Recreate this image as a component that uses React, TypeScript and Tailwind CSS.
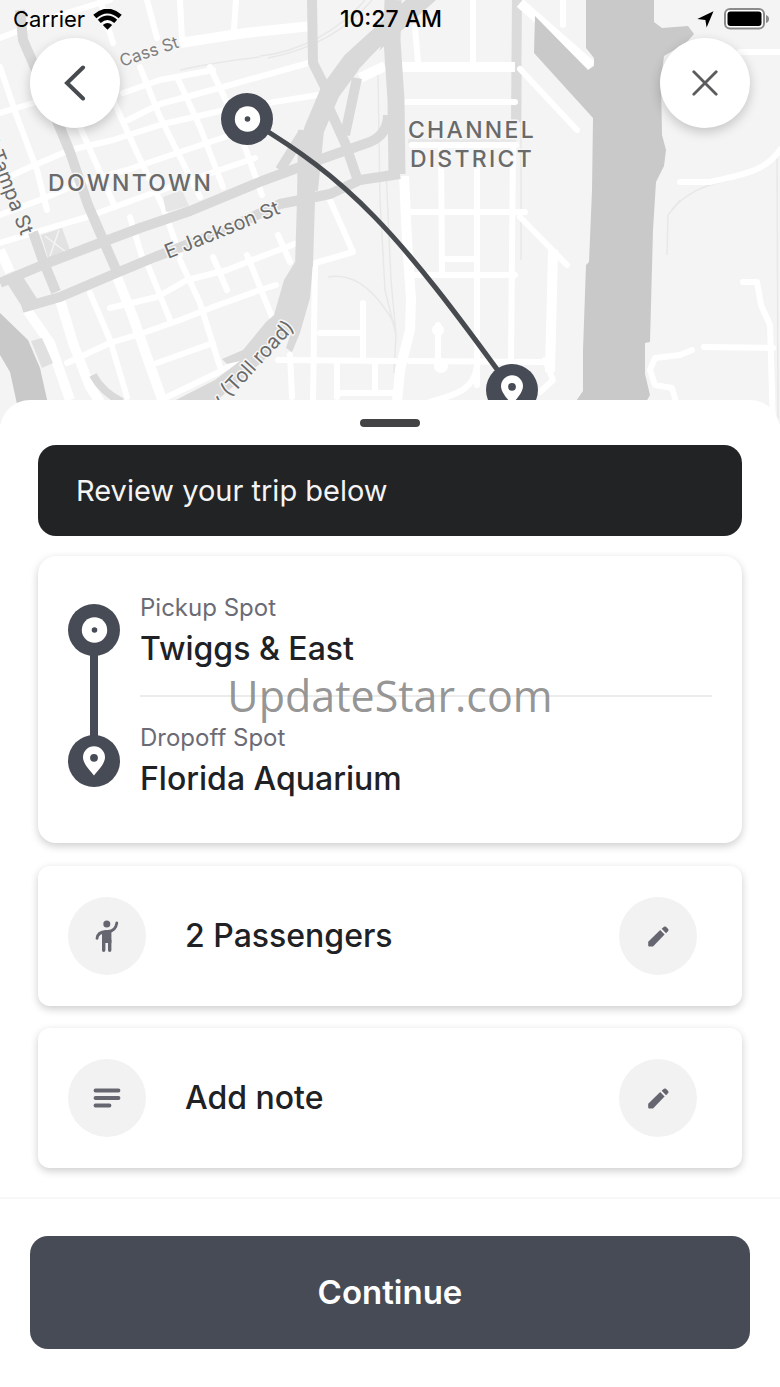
import React from "react";

interface CircleProps {
  children: React.ReactNode;
}

interface OptionRowProps {
  icon: React.ReactNode;
  label: string;
  editLabel: string;
}

interface Stop {
  type: string;
  name: string;
}

const stops: Stop[] = [
  { type: "Pickup Spot", name: "Twiggs & East" },
  { type: "Dropoff Spot", name: "Florida Aquarium" },
];

// White streets grouped by stroke width
const wideStreets = [
  "M117 277 L133 317 L147 357 L163 402",
  "M27 310 L50 343 L70 400",
  "M60 300 L73 343 L90 387 L100 402",
  "M404 176 L407 240 L411 300 L410 330 L400 370 L397 402",
  "M398 67 L515 67",
  "M553 250 L550 372",
  "M520 3 L592 66",
  "M0 250 L10 272",
  "M180 43 L245 33 L312 26",
  "M360 78 L385 66",
];

const mediumStreets = [
  "M0 38 L60 15 L110 0",
  "M0 113 L30 104 L62 92",
  "M123 93 L160 80 L213 70",
  "M128 120 L160 104 L223 87 L312 62",
  "M0 181 L30 167 L70 150 L113 140 L163 124 L225 110 L318 95",
  "M0 215 L40 200 L80 183 L127 170 L177 153 L240 132",
  "M0 243 L43 230 L87 217 L150 194 L255 158",
  "M110 308 L157 297 L187 280 L227 270 L260 257 L300 242",
  "M67 363 L110 343 L143 333 L180 320 L213 307 L260 290 L276 285",
  "M157 363 L213 343",
  "M167 397 L217 373 L240 360",
  "M0 67 L17 117 L37 170 L47 210",
  "M80 127 L99 170 L115 207",
  "M110 93 L137 153 L163 207 L180 255",
  "M140 67 L160 117 L200 197",
  "M177 77 L200 127 L223 187",
  "M210 67 L227 103 L246 150 L262 195",
  "M100 0 L113 43",
  "M147 0 L157 38",
  "M180 0 L182 40",
  "M236 0 L234 30",
  "M130 217 L143 260",
  "M147 263 L170 320",
  "M180 260 L200 303 L220 367",
  "M213 257 L227 290",
  "M247 255 L272 317",
  "M278 235 L290 262",
  "M90 293 L110 340 L127 397",
  "M401 102 L515 102",
  "M473 0 L473 65",
  "M415 27 L418 62",
  "M313 400 L315 263 L353 252 L330 200",
  "M278 360 L395 361",
  "M320 333 L363 333",
  "M363 303 L363 358",
  "M290 355 L292 397",
  "M337 362 L337 397",
  "M375 362 L375 393",
  "M340 393 L397 393",
  "M441 145 L442 275",
  "M477 145 L477 385",
  "M513 145 L511 365",
  "M412 145 L516 145",
  "M412 212 L525 212",
  "M415 275 L515 275",
  "M445 259 L477 259",
  "M438 325 L438 365",
  "M410 361 L550 362",
  "M477 365 C475 390 455 395 430 402",
  "M520 217 L567 265",
  "M520 69 L577 130",
  "M545 360 L553 380 L540 392",
  "M563 0 L563 25",
  "M740 52 L780 52",
  "M680 182 L710 182 C740 175 765 172 780 150",
  "M743 282 L757 282 L761 305 L770 325 L773 425",
  "M704 347 L773 348",
  "M692 350 L680 355 L655 358 L650 370 L655 385 L672 388 L676 402",
];

const arterials = [
  "M0 283 L45 264 L100 243 L140 228 L190 211 L262 181 L327 157 L370 142 Q388 134 388 115",
  "M22 308 L60 297 L114 274 L155 257 L220 232 L280 204 L330 194 L360 180 L400 174",
  "M20 10 L23 40 L33 63 L60 128 L70 152 L88 205 L98 228 L117 272",
  "M33 232 L42 258 L56 292",
  "M12 280 L30 304",
  "M312 0 L313 63 L330 97",
  "M357 78 L345 135",
  "M330 110 L345 143 L357 178",
  "M303 133 L280 170",
];

const railLines = [
  "M260 56 C300 52 340 30 365 0",
  "M268 58 C310 50 345 32 372 0",
  "M378 75 L380 200 L385 290 L396 335 L394 373",
  "M386 170 L391 280 L396 335",
  "M328 277 Q365 270 395 325",
  "M180 70 Q215 62 260 57",
  "M672 210 Q690 187 730 180",
  "M680 200 L668 215 L667 255",
  "M777 150 L778 420",
  "M521 70 L521 260",
];

const StartMark = () => (
  <>
    <circle cx="26" cy="26" r="26" fill="#474b55" />
    <circle cx="26.5" cy="26" r="12.7" fill="#fff" />
    <circle cx="26.5" cy="26" r="2.8" fill="#474b55" />
  </>
);

const EndMark = () => (
  <>
    <circle cx="26" cy="26" r="26" fill="#474b55" />
    <path
      d="M26 40.5 C23 36.5 15 29 15 22.3 A11 11 0 0 1 37 22.3 C37 29 29 36.5 26 40.5 Z"
      fill="#fff"
    />
    <circle cx="26" cy="22.8" r="3.9" fill="#474b55" />
  </>
);

const TripMap = () => (
  <svg
    viewBox="0 0 780 424"
    preserveAspectRatio="xMidYMin slice"
    className="absolute inset-0 h-full w-full font-['Inter',sans-serif]"
    role="img"
    aria-label="Trip map"
  >
    <rect width="780" height="424" fill="#f4f4f4" />

    {/* Rails and small streets */}
    <g fill="none" stroke="#e8e8e8" strokeWidth="1.5">
      {railLines.map((d) => (
        <path key={d} d={d} />
      ))}
    </g>
    <path d="M517 0 L516 122" stroke="#dbdbdb" strokeWidth="10" />
    <path d="M408 141 L516 141" stroke="#e8e8e8" strokeWidth="4" />
    <g fill="none" stroke="#fff" strokeLinejoin="round">
      <g strokeWidth="6" strokeLinecap="round">
        {mediumStreets.map((d) => (
          <path key={d} d={d} />
        ))}
      </g>
      <g strokeWidth="10">
        {wideStreets.map((d) => (
          <path key={d} d={d} />
        ))}
      </g>
    </g>
    <circle cx="438" cy="330" r="6" fill="#fff" />
    <circle cx="441" cy="366" r="7" fill="#fff" />

    {/* Parks */}
    <path d="M41 235 L62 228 L70 250 L48 258 Z" fill="#e2e2e2" />
    <path d="M163 197 L182 190 L189 206 L166 212 Z" fill="#e6e6e6" />
    <path d="M45 236 L66 252 M59 230 L50 256" stroke="#f4f4f4" strokeWidth="1.5" />
    <path d="M31 341 L42 338 L53 363 L42 368 Z" fill="#e0e0e0" />

    {/* Main roads */}
    <g fill="none" stroke="#d9d9d9" strokeLinejoin="round">
      <g strokeWidth="10">
        {arterials.map((d) => (
          <path key={d} d={d} />
        ))}
      </g>
      <path d="M15 280 L31 305" strokeWidth="17" />
      <path d="M393 0 L392 40 L396 100 L397 174" strokeWidth="17" />
      <path d="M430 -8 L387 30 L352 62 L330 92 L314 130 L308 190" strokeWidth="20" />
      <path d="M307 130 L306 200 L304 266" strokeWidth="18" />
      <path d="M93 375 Q102 392 122 402" strokeWidth="8" />
    </g>
    <path
      d="M295 262 L284 280 L274 315 L266 322 L243 350 L222 359 L227 364 L240 361 L215 380 L172 402 L215 402 L262 362 L292 330 L286 348 L292 352 L300 333 L310 298 L313 262 Z"
      fill="#d9d9d9"
    />
    <path d="M372 55 L381 46 L375 62 L358 70 Z" fill="#f4f4f4" />

    {/* Water */}
    <g fill="#c9c9c9">
      <path d="M586 0 L654 0 L654 22 L662 28 L688 26 L694 34 L686 43 L664 56 L661 80 L662 135 L666 150 L664 166 L656 182 L653 230 L650 342 L645 343 L645 374 L650 395 L645 404 L574 404 L583 391 L583 350 L586 265 L589 262 L592 190 L593 118 L534 53 L535 16 L588 70 L594 66 L594 58 L586 48 Z" />
      <path d="M0 313 L28 340 L40 368 L48 404 L17 404 L10 372 L0 355 Z" />
    </g>

    {/* Place names */}
    <g
      fill="#6a6a6a"
      stroke="#f6f6f6"
      strokeWidth="3"
      strokeLinejoin="round"
      style={{ paintOrder: "stroke" }}
    >
      <text transform="translate(122 67) rotate(-19)" fontSize="17" fill="#808080">
        Cass St
      </text>
      <text transform="translate(168 259) rotate(-22)" fontSize="20">
        E Jackson St
      </text>
      <text transform="translate(21 236) rotate(69)" textAnchor="end" fontSize="20">
        N Tampa St
      </text>
      <text transform="translate(295 328) rotate(-47)" textAnchor="end" fontSize="20">
        Pkwy (Toll road)
      </text>
      <g fontSize="23" fontWeight="500" className="tracking-widest">
        <text x="48" y="191">
          DOWNTOWN
        </text>
        <text x="472" y="138" textAnchor="middle">
          CHANNEL
        </text>
        <text x="472" y="167" textAnchor="middle">
          DISTRICT
        </text>
      </g>
    </g>

    {/* Route */}
    <path
      d="M247 119 C350 180 395 228 512 390"
      fill="none"
      stroke="#474a4e"
      strokeWidth="5"
    />
    <g transform="translate(221 93)">
      <StartMark />
    </g>
    <g transform="translate(486 364)">
      <EndMark />
    </g>
    <rect x="30" y="400" width="720" height="24" fill="#fff" />
  </svg>
);

const StatusBar = () => (
  <div className="relative grid h-[38px] grid-cols-3 items-center pr-[11px] pl-[13px] text-[22px] leading-[38px] text-black">
    <div className="flex items-center gap-2">
      <span>Carrier</span>
      <svg className="h-[21px] w-[29px]" viewBox="0 0 29 21" fill="none" stroke="#000">
        <path d="M1.8 7.6 Q14.5 -3.6 27.2 7.6" strokeWidth="4.6" />
        <path d="M6.3 12.3 Q14.5 5.2 22.7 12.3" strokeWidth="4.4" />
        <path d="M14.5 20.8 L9.8 16 Q14.5 12 19.2 16 Z" fill="#000" stroke="none" />
      </svg>
    </div>
    <span className="text-center text-[23px] font-medium">10:27 AM</span>
    <div className="flex items-center justify-end gap-2.5">
      <svg className="h-[17px] w-[17px]" viewBox="0 0 17 17">
        <path d="M16.5 0.3 L9.6 16.6 L8.4 9 L0.3 8 Z" fill="#000" />
      </svg>
      <svg className="h-[22px] w-[45px]" viewBox="0 0 45 22">
        <rect x="1" y="1" width="39" height="19.5" rx="5" fill="#fff" stroke="#8b8b8b" strokeWidth="2" />
        <rect x="3.5" y="3.5" width="34" height="14.5" rx="3" fill="#000" />
        <path d="M42 7 Q45 8 45 11 Q45 14 42 15 Z" fill="#8b8b8b" />
      </svg>
    </div>
  </div>
);

const IconCircle = ({ children }: CircleProps) => (
  <span className="flex size-[78px] shrink-0 items-center justify-center rounded-full bg-[#f2f2f2]">
    {children}
  </span>
);

const PassengerIcon = () => (
  <svg className="h-8 w-6" viewBox="0 0 24 32" fill="none" stroke="#666670" strokeLinecap="round">
    <circle cx="11.8" cy="4.1" r="3.5" fill="#666670" stroke="none" />
    <path d="M21.8 3 C21 8.5 18 11.3 13 11.5" strokeWidth="2.8" />
    <path d="M2 18.4 C2.5 13.5 6 11.8 11 11.5" strokeWidth="2.8" />
    <path d="M7 11.5 L11 10.2 L16.4 10 L16.4 23 L7 23 Z" fill="#666670" stroke="none" />
    <path d="M8.7 20 L8.7 30.2 M14.7 20 L14.7 30.2" strokeWidth="3.4" />
  </svg>
);

const NoteIcon = () => (
  <svg className="h-5 w-7" viewBox="0 0 28 20" stroke="#666670" strokeWidth="3.8" strokeLinecap="round">
    <path d="M2.5 2.5 H25.5 M2.5 10 H25.5 M2.5 17.5 H16.5" />
  </svg>
);

const PencilIcon = () => (
  <svg className="size-[21px]" viewBox="0 0 20 20" fill="#666670">
    <path d="M0.2 15 L11.6 3.9 L15.8 8.1 L4.8 19.6 H1.2 Q0.2 19.6 0.2 18.6 Z" />
    <path d="M13 2.7 L15.2 0.8 Q16.2 0 17.1 0.8 L19.2 2.9 Q20 3.8 19.2 4.7 L17.2 6.9 Z" />
  </svg>
);

const OptionRow = ({ icon, label, editLabel }: OptionRowProps) => (
  <div className="flex h-[140px] items-center gap-[39px] rounded-xl bg-white pr-[45px] pl-[30px] shadow-[0_3px_8px_rgba(0,0,0,0.2)]">
    <IconCircle>{icon}</IconCircle>
    <p className="flex-1 text-[32px] leading-[48px] font-medium">{label}</p>
    <button type="button" aria-label={editLabel} className="rounded-full">
      <IconCircle>
        <PencilIcon />
      </IconCircle>
    </button>
  </div>
);

const App = () => {
  return (
    <div className="relative min-h-screen bg-white font-['Inter',sans-serif] text-[#202124]">
      {/* Map header */}
      <header className="relative h-[424px] overflow-hidden">
        <TripMap />
        <StatusBar />
        <nav className="relative flex justify-between px-[30px]">
          <button
            type="button"
            aria-label="Back"
            className="flex size-[90px] items-center justify-center rounded-full bg-white shadow-[0_4px_12px_rgba(0,0,0,0.2)]"
          >
            <svg className="h-9 w-[22px]" viewBox="0 0 22 36" fill="none" stroke="#474a4e" strokeWidth="4">
              <path d="M19 2.5 L3 18 L19 33.5" strokeLinecap="round" />
            </svg>
          </button>
          <button
            type="button"
            aria-label="Close"
            className="flex size-[90px] items-center justify-center rounded-full bg-white shadow-[0_4px_12px_rgba(0,0,0,0.2)]"
          >
            <svg className="size-[26px]" viewBox="0 0 26 26" stroke="#5c5c5e" strokeWidth="2.8">
              <path d="M1.8 1.8 L24.2 24.2 M24.2 1.8 L1.8 24.2" strokeLinecap="round" />
            </svg>
          </button>
        </nav>
      </header>

      {/* Bottom sheet */}
      <main className="relative -mt-6 rounded-t-[30px] bg-white pt-[19px]">
        <div className="mx-auto h-2 w-[60px] rounded-full bg-[#434345]" />
        <div className="mt-[18px] px-[38px] pb-[29px]">
          <h1 className="rounded-[18px] bg-[#222325] px-[38px] text-[29px] leading-[91px] text-[#f4f4f4]">
            Review your trip below
          </h1>

          {/* Stops */}
          <section className="mt-5 flex gap-5 rounded-[18px] bg-white px-[30px] shadow-[0_3px_8px_rgba(0,0,0,0.2)]">
            <div className="flex flex-col items-center pt-12">
              <svg className="size-[52px]" viewBox="0 0 52 52">
                <StartMark />
              </svg>
              <div className="-my-1 h-[87px] w-2 bg-[#474b55]" />
              <svg className="size-[52px]" viewBox="0 0 52 52">
                <EndMark />
              </svg>
            </div>
            <ul className="flex-1 divide-y-2 divide-[#ececec] pt-[11px] pb-[18px]">
              {stops.map((stop) => (
                <li key={stop.type} className="pt-6 pb-[22px]">
                  <p className="text-2xl leading-[34px] text-[#6b6b76]">{stop.type}</p>
                  <p className="text-[32px] leading-[48px] font-medium">{stop.name}</p>
                </li>
              ))}
            </ul>
          </section>

          <div className="mt-[23px] flex flex-col gap-[22px]">
            <OptionRow
              icon={<PassengerIcon />}
              label="2 Passengers"
              editLabel="Edit passengers"
            />
            <OptionRow icon={<NoteIcon />} label="Add note" editLabel="Edit note" />
          </div>
        </div>
      </main>

      {/* Footer */}
      <footer className="relative border-t-2 border-[#f7f7f7] bg-white px-[30px] pt-[37px] pb-[37px]">
        <button
          type="button"
          className="w-full rounded-[18px] bg-[#474b55] text-[33px] leading-[113px] font-semibold text-white"
        >
          Continue
        </button>
      </footer>

      <div className="pointer-events-none absolute inset-0 flex items-center justify-center pt-1 font-['Open_Sans',sans-serif] text-[43px] leading-none text-[#888888]/90">
        UpdateStar.com
      </div>
    </div>
  );
};

export default App;
